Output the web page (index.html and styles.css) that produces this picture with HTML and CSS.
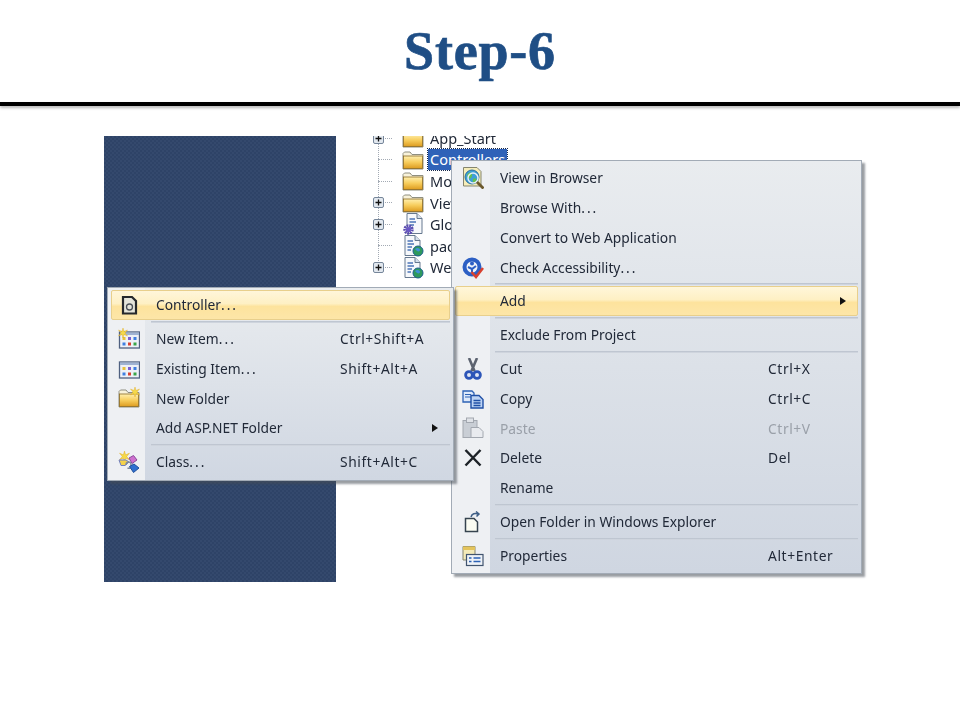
FILE: index.html
```html
<!DOCTYPE html>
<html lang="en">
<head>
<meta charset="utf-8">
<title>Step-6</title>
<link rel="stylesheet" href="styles.css">
</head>
<body>
<svg class="defs" width="0" height="0" aria-hidden="true">
  <defs>
    <linearGradient id="fold" x1="0" y1="0" x2="0" y2="1"><stop offset="0" stop-color="#fff0b0"/><stop offset=".5" stop-color="#f7cd5c"/><stop offset="1" stop-color="#dd9c20"/></linearGradient>
    <symbol id="folder" viewBox="0 0 22 22"><path d="M1 5.500V20H21V5.500H10L8 3H2.500L1 4.500Z" fill="#f8f2da" stroke="#8f8f80"/><rect x="1.500" y="7" width="19" height="12.500" fill="url(#fold)" stroke="#8a6a24" stroke-width=".8"/></symbol>
    <symbol id="doc" viewBox="0 0 22 22"><path d="M3 .5H13L18 5.500V20.500H3Z" fill="#f6f8fb" stroke="#66788f"/><path d="M13 .5V5.500H18" fill="#d5e0ec" stroke="#66788f"/><path d="M5.500 6H11M5.500 9H12M5.500 12H10M5.500 15H9" stroke="#4c74b8" stroke-width="1.400"/></symbol>
    <symbol id="grid" viewBox="0 0 22 22"><rect x="1.500" y="4" width="20" height="16" fill="#eef1f7" stroke="#4f6080" stroke-width="1.300"/><rect x="2" y="4.500" width="19" height="2.500" fill="#9fb3d2"/><rect x="4.500" y="9" width="3" height="3" fill="#e8c23c"/><rect x="10" y="9" width="3" height="3" fill="#7b5fd0"/><rect x="15.500" y="9" width="3" height="3" fill="#3f7fe0"/><rect x="4.500" y="14.500" width="3" height="3" fill="#3f7fe0"/><rect x="10" y="14.500" width="3" height="3" fill="#d8402f"/><rect x="15.500" y="14.500" width="3" height="3" fill="#3aa548"/></symbol>
    <symbol id="spark" viewBox="0 0 10 10"><path d="M5 0L6 3.500 9.500 2 7 5 9.500 8 6 6.500 5 10 4 6.500.5 8 3 5 .5 2 4 3.500Z" fill="#f5da4a" stroke="#e0a820" stroke-width=".4"/></symbol>
    <symbol id="plus" viewBox="0 0 11 11"><rect x=".5" y=".5" width="10" height="10" rx="1.500" fill="#e2e8ef" stroke="#76869a"/><path d="M2.500 5.500H8.500M5.500 2.500V8.500" stroke="#111" stroke-width="1.300"/></symbol>
  </defs>
</svg>
<div class="slide">
  <header class="head"><h1 class="title">Step-6</h1></header>
  <div class="rule"></div>
  <main class="stage">
    <div class="panel"></div>
    <div class="tree">
      <div class="node"><span class="slot"><svg class="exp"><use href="#plus"/></svg></span><svg class="ticon"><use href="#folder"/></svg><span class="name">App_Start</span></div>
      <div class="node"><span class="slot"></span><svg class="ticon"><use href="#folder"/></svg><span class="name selected">Controllers</span></div>
      <div class="node"><span class="slot"></span><svg class="ticon"><use href="#folder"/></svg><span class="name">Models</span></div>
      <div class="node"><span class="slot"><svg class="exp"><use href="#plus"/></svg></span><svg class="ticon"><use href="#folder"/></svg><span class="name">Views</span></div>
      <div class="node"><span class="slot"><svg class="exp"><use href="#plus"/></svg></span><svg class="ticon" viewBox="0 0 22 22"><use href="#doc" x="2"/><circle cx="6.500" cy="16.500" r="3.800" fill="none" stroke="#5a4bb0" stroke-width="2.800" stroke-dasharray="1.800 .8"/><circle cx="6.500" cy="16.500" r="2.600" fill="#6a58c4"/></svg><span class="name">Global.asax</span></div>
      <div class="node"><span class="slot"></span><svg class="ticon" viewBox="0 0 22 22"><use href="#doc"/><circle cx="16" cy="16" r="5" fill="#2f9a5c" stroke="#1d5f8f"/><path d="M13 14C15 12 18 13 18 15S15 17 13 14Z" fill="#3f8fd8"/></svg><span class="name">packages.config</span></div>
      <div class="node"><span class="slot"><svg class="exp"><use href="#plus"/></svg></span><svg class="ticon" viewBox="0 0 22 22"><use href="#doc"/><circle cx="16" cy="16" r="5" fill="#2f9a5c" stroke="#1d5f8f"/><path d="M13 14C15 12 18 13 18 15S15 17 13 14Z" fill="#3f8fd8"/></svg><span class="name">Web.config</span></div>
    </div>

    <nav class="menu menu-main">
      <div class="item"><svg class="ic" viewBox="0 0 22 22"><path d="M1.500 .5H15L19 4.500V19H1.500Z" fill="#f6edb8" stroke="#85856e"/><circle cx="10" cy="10" r="7" fill="#3d9fd8" stroke="#2b6f9f"/><path d="M5 8C7 4 11 5 10 9S5 12 5 8ZM11 12C13 10 16 12 14 15S10 15 11 12Z" fill="#62bf52"/><circle cx="11" cy="11" r="5" fill="none" stroke="#e6eff8" stroke-width="1.500"/><path d="M15 15L21.500 21.500" stroke="#6d5a2e" stroke-width="2.800"/></svg><span class="lab">View in Browser</span></div>
      <div class="item"><span class="ic"></span><span class="lab">Browse With<span class="dots">...</span></span></div>
      <div class="item"><span class="ic"></span><span class="lab">Convert to Web Application</span></div>
      <div class="item"><svg class="ic" viewBox="0 0 22 22"><circle cx="10" cy="10" r="7.500" fill="#f1f4fa" stroke="#2c5fc4" stroke-width="4"/><circle cx="10" cy="6.500" r="2" fill="#2c5fc4"/><path d="M6 10L10 12L14 9M10 12V15" fill="none" stroke="#2c5fc4" stroke-width="2"/><path d="M9.500 15L14 20L21 11" fill="none" stroke="#d8402f" stroke-width="2.600"/></svg><span class="lab">Check Accessibility<span class="dots">...</span></span></div>
      <div class="sep"></div>
      <div class="item hot"><span class="ic"></span><span class="lab">Add</span><i class="arrow"></i></div>
      <div class="sep"></div>
      <div class="item"><span class="ic"></span><span class="lab">Exclude From Project</span></div>
      <div class="sep"></div>
      <div class="item"><svg class="ic" viewBox="0 0 22 22"><path d="M7 0L12.500 13M15 0L9.500 13" stroke="#5c6370" stroke-width="2.600" fill="none"/><circle cx="7" cy="17" r="3.400" fill="#dfe6f4" stroke="#2c55b8" stroke-width="2.800"/><circle cx="15" cy="17" r="3.400" fill="#dfe6f4" stroke="#2c55b8" stroke-width="2.800"/></svg><span class="lab">Cut</span><span class="key">Ctrl+X</span></div>
      <div class="item"><svg class="ic" viewBox="0 0 22 22"><path d="M1 3H10L12 5V14H1Z" fill="#dde9fa" stroke="#2d62b5" stroke-width="1.300"/><path d="M3 6.500H9M3 9H9" stroke="#2d62b5" stroke-width="1.200"/><path d="M9 7.500H17L21 11.500V20H9Z" fill="#bcd3f4" stroke="#1f4fa5" stroke-width="1.400"/><path d="M11.500 12.500H18.500M11.500 15H18.500M11.500 17.500H18.500" stroke="#1f4fa5" stroke-width="1.300"/></svg><span class="lab">Copy</span><span class="key">Ctrl+C</span></div>
      <div class="item off"><svg class="ic" viewBox="0 0 22 22"><rect x="1" y="3.500" width="14" height="17" fill="#c9ced5" stroke="#a3a8b0"/><rect x="4.500" y="1" width="7" height="4.500" fill="#dfe2e7" stroke="#a3a8b0"/><path d="M9 10.500H17L21 14.500V20.500H9Z" fill="#e9ebef" stroke="#a3a8b0"/></svg><span class="lab">Paste</span><span class="key">Ctrl+V</span></div>
      <div class="item"><svg class="ic" viewBox="0 0 22 22"><path d="M3.500 3L18.500 18.500M18.500 3L3.500 18.500" stroke="#1d2227" stroke-width="2.500" fill="none"/></svg><span class="lab">Delete</span><span class="key">Del</span></div>
      <div class="item"><span class="ic"></span><span class="lab">Rename</span></div>
      <div class="sep"></div>
      <div class="item"><svg class="ic" viewBox="0 0 22 22"><path d="M3.500 7.500H12L15.500 11V20.500H3.500Z" fill="#fbfcf2" stroke="#36434f" stroke-width="1.500"/><path d="M9 6C10 2.500 13 2 16 3M14 .5L17 3L14.500 5.500" fill="none" stroke="#3f5f86" stroke-width="1.500"/></svg><span class="lab">Open Folder in Windows Explorer</span></div>
      <div class="sep"></div>
      <div class="item"><svg class="ic" viewBox="0 0 22 22"><path d="M1 1.500H13V15H1Z" fill="#f4eab8" stroke="#85856e"/><path d="M1 1.500H13V5H1Z" fill="#e4c45c"/><rect x="4.500" y="9.500" width="16.500" height="11" fill="#eef2f7" stroke="#41546e" stroke-width="1.200"/><path d="M7 13H9.500M11.500 13H18.500M7 16.500H9.500M11.500 16.500H18.500" stroke="#2d62b5" stroke-width="1.500"/></svg><span class="lab">Properties</span><span class="key">Alt+Enter</span></div>
    </nav>

    <nav class="menu menu-sub">
      <div class="item hot"><svg class="ic" viewBox="0 0 22 22"><path d="M5 3H14L18 7V19.500H5Z" fill="#e4e4da" stroke="#25282c" stroke-width="2.200"/><circle cx="11.500" cy="13" r="3" fill="none" stroke="#4a5058" stroke-width="1.300"/></svg><span class="lab">Controller<span class="dots">...</span></span></div>
      <div class="sep"></div>
      <div class="item"><svg class="ic" viewBox="0 0 22 22"><use href="#grid"/><use href="#spark" x="0" y="0" width="10" height="10"/></svg><span class="lab">New Item<span class="dots">...</span></span><span class="key">Ctrl+Shift+A</span></div>
      <div class="item"><svg class="ic" viewBox="0 0 22 22"><use href="#grid"/></svg><span class="lab">Existing Item<span class="dots">...</span></span><span class="key">Shift+Alt+A</span></div>
      <div class="item"><svg class="ic" viewBox="0 0 22 22"><use href="#folder"/><use href="#spark" x="12" y="0" width="10" height="10"/></svg><span class="lab">New Folder</span></div>
      <div class="item"><span class="ic"></span><span class="lab">Add ASP.NET Folder</span><i class="arrow"></i></div>
      <div class="sep"></div>
      <div class="item"><svg class="ic" viewBox="0 0 22 22"><use href="#spark" x="1" y="0" width="11" height="11"/><path d="M1 9H8L11 11L7 14.500H3Z" fill="#f4d24a" stroke="#6f7ec0"/><path d="M11 7L15.500 4.500L19 9L14 12.500Z" fill="#cf70cf" stroke="#8a4a9a"/><path d="M8 14C8 10 13 10 13 13.500S12 18 9.500 17" fill="none" stroke="#7f8a9c" stroke-width="1.500"/><path d="M11.500 15.500L16 13L21 17L15.500 21.500Z" fill="#2f6fd0" stroke="#1f4f9a"/></svg><span class="lab">Class<span class="dots">...</span></span><span class="key">Shift+Alt+C</span></div>
    </nav>
  </main>
</div>
</body>
</html>
```
FILE: styles.css
```css
* { box-sizing: border-box; }
html, body { margin: 0; padding: 0; }
body { width: 960px; height: 720px; background: #fff; overflow: hidden; font-family: "Liberation Sans", sans-serif; }
.defs { position: absolute; }
.slide { display: flex; flex-direction: column; width: 960px; height: 720px; }
.head { height: 102px; display: flex; align-items: center; justify-content: center; }
.title { margin: 0; font: 700 54px/1 "Liberation Serif", serif; color: #1f4e85; letter-spacing: .8px; -webkit-text-stroke: .7px #1f4e85; }
.rule { height: 4px; background: #000; box-shadow: 0 2px 3px rgba(0,0,0,.28); flex: none; }
.stage { position: relative; margin: 30px 0 0 104px; width: 760px; height: 446px; display: flex; filter: blur(.4px); font: 13.8px/1 "Noto Sans", sans-serif; color: #212938; }
.panel { width: 232px; height: 446px; flex: none; background: repeating-conic-gradient(#2e4367 0 25%, #34496d 0 50%) 0 0 / 4px 4px; }
.tree { position: relative; margin-left: 36px; width: 300px; height: 446px; overflow: hidden; display: flex; flex-direction: column; font-size: 14.5px; }
.tree::before { content: ""; position: absolute; left: 6px; top: 0; height: 131px; border-left: 1px dotted #a3aab4; }
.node { height: 21.6px; display: flex; align-items: center; flex: none; position: relative; top: -8.8px; }
.slot { width: 30px; height: 1px; flex: none; position: relative; }
.slot::before { content: ""; position: absolute; left: 6px; top: 0; width: 14px; border-top: 1px dotted #a3aab4; }
.exp { position: absolute; left: 1px; top: -5px; width: 11px; height: 11px; }
.ticon { width: 22px; height: 22px; margin-right: 4px; flex: none; }
.name { padding: 3px 2px; white-space: nowrap; }
.selected { background: #2f62b8; color: #fff; outline: 1px dotted #16274a; width: 79px; }
.menu { position: absolute; display: flex; flex-direction: column; padding: 2px 3px; border: 1px solid #a2abb6; box-shadow: 3px 3px 2px rgba(70,76,86,.55); }
.menu-main { left: 347px; top: 24px; width: 411px; height: 414px; background: linear-gradient(90deg, #eef0f3 0 38px, transparent 38px), linear-gradient(180deg, #e9ecef, #cfd6e1); }
.menu-sub { left: 3px; top: 151px; width: 347px; height: 194px; background: linear-gradient(90deg, #eef0f3 0 37px, transparent 37px), linear-gradient(180deg, #e9ecef, #d0d7e2); }
.item { height: 29.9px; flex: none; display: flex; align-items: center; position: relative; border: 1px solid transparent; border-radius: 2px; }
.hot { border-color: #e8cf8c; background: linear-gradient(180deg, #fff6da 0%, #fef0c4 45%, #fde39d 55%, #fde6a8 100%); }
.off { color: #9aa0a9; }
.ic { width: 22px; height: 22px; margin-left: 6px; flex: none; display: block; }
.lab { margin-left: 16px; white-space: nowrap; }
.dots { letter-spacing: 2px; }
.key { position: absolute; white-space: nowrap; letter-spacing: .6px; }
.menu-main .key { left: 312px; }
.menu-sub .key { left: 228px; }
.arrow { position: absolute; width: 0; height: 0; border-left: 6px solid #111; border-top: 4px solid transparent; border-bottom: 4px solid transparent; right: 11px; top: 50%; margin-top: -4px; }
.sep { height: 3.8px; flex: none; margin-left: 40px; display: flex; align-items: center; }
.sep::before { content: ""; display: block; width: 100%; height: 2px; background: linear-gradient(180deg, #b7bfcb, #d6dbe3); }
```
